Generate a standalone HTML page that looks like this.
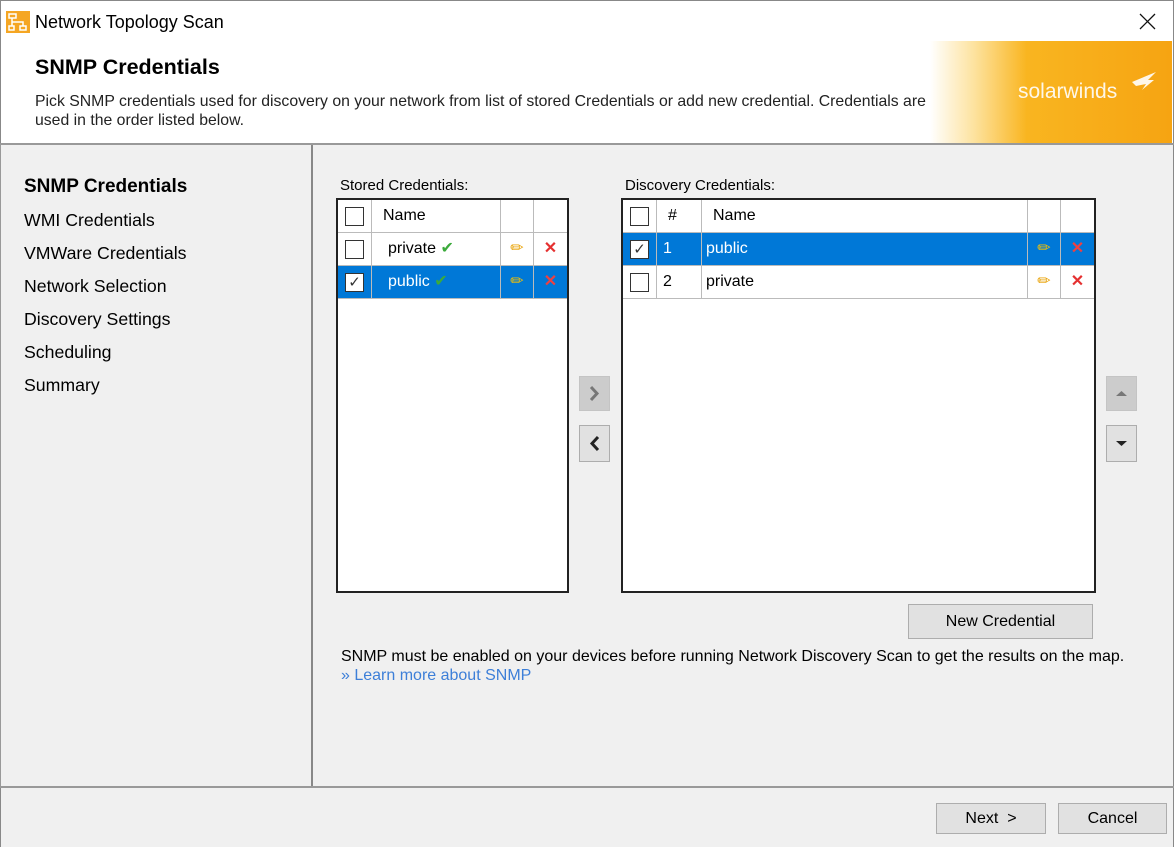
<!DOCTYPE html>
<html><head><style>
*{box-sizing:border-box;margin:0;padding:0}
body{width:1174px;height:847px;position:relative;font-family:"Liberation Sans",sans-serif;background:#f0f0f0;overflow:hidden;color:#000}
.a{position:absolute}
.t{font-size:17.7px}
.tb{position:absolute;background:#fff;border:2px solid #222}
.cell{position:absolute;border-right:1px solid #bbb;border-bottom:1px solid #bbb;height:33px;font-size:16px;line-height:32px}
.cb{position:absolute;width:19px;height:19px;border:1px solid #333;background:#fff;top:7px;left:7px}
.sel{background:#0078d7;color:#fff}
.btn{position:absolute;background:#e1e1e1;border:1px solid #adadad;font-size:16px;text-align:center}
</style></head><body>
<div class="a" style="left:0;top:0;width:1174px;height:143px;background:#fff;border-top:1px solid #888"></div>
<div class="a" style="left:0;top:0;width:1px;height:847px;background:#888"></div>
<div class="a" style="right:0;top:0;width:1px;height:847px;background:#888"></div>
<svg class="a" style="left:6px;top:11px" width="24" height="22" viewBox="0 0 24 22"><rect width="24" height="22" fill="#f5a623"/><rect x="3" y="3" width="7" height="4" fill="none" stroke="#fff" stroke-width="1.5"/><rect x="3" y="15" width="5" height="4" fill="none" stroke="#fff" stroke-width="1.5"/><rect x="14" y="15" width="6" height="4" fill="none" stroke="#fff" stroke-width="1.5"/><path d="M6 7v4h11v4M6 11v4" stroke="#fff" stroke-width="1.5" fill="none"/></svg>
<div class="a" style="left:35px;top:12px;font-size:18px">Network Topology Scan</div>
<svg class="a" style="left:1139px;top:13px" width="17" height="17"><path d="M1 1L16 16M16 1L1 16" stroke="#111" stroke-width="1.3"/></svg>
<div class="a" style="left:35px;top:55px;font-size:21.5px;font-weight:bold">SNMP Credentials</div>
<div class="a" style="left:35px;top:92px;font-size:15.8px;line-height:19px;color:#222;width:910px">Pick SNMP credentials used for discovery on your network from list of stored Credentials or add new credential. Credentials are<br>used in the order listed below.</div>
<div class="a" style="left:930px;top:41px;width:242px;height:102px;background:linear-gradient(90deg,#fff 0%,#fde3a0 18%,#f9b520 40%,#f6a412 100%)"></div>
<div class="a" style="left:1018px;top:80px;color:#fff;font-size:21px;opacity:.9">solarwinds</div>
<svg class="a" style="left:1128px;top:70px" width="30" height="30"><path d="M4 12L28 2 20 10 26 10 14 20 18 14 8 16z" fill="#fff" opacity=".9"/></svg>
<div class="a" style="left:0;top:143px;width:1174px;height:2px;background:#999"></div>
<div class="a" style="left:0;top:145px;width:312px;height:643px;border:1px solid #999;border-top:none"></div>
<div class="a" style="left:311px;top:145px;width:2px;height:643px;background:#888"></div>
<div class="a" style="left:0;top:786px;width:1174px;height:2px;background:#999"></div>
<div class="a t" style="left:24px;top:176px;font-weight:bold;font-size:19px">SNMP Credentials</div>
<div class="a t" style="left:24px;top:210px">WMI Credentials</div>
<div class="a t" style="left:24px;top:243px">VMWare Credentials</div>
<div class="a t" style="left:24px;top:276px">Network Selection</div>
<div class="a t" style="left:24px;top:309px">Discovery Settings</div>
<div class="a t" style="left:24px;top:342px">Scheduling</div>
<div class="a t" style="left:24px;top:375px">Summary</div>
<div class="a" style="left:340px;top:177px;font-size:15px">Stored Credentials:</div>
<div class="a" style="left:625px;top:177px;font-size:15px">Discovery Credentials:</div>
<div class="tb" style="left:336px;top:198px;width:233px;height:395px">
 <div class="cell" style="left:0;top:0;width:34px"><div class="cb"></div></div>
 <div class="cell" style="left:34px;top:0;width:129px;padding-left:11px">Name</div>
 <div class="cell" style="left:163px;top:0;width:33px"></div>
 <div class="cell" style="left:196px;top:0;width:33px;border-right:none"></div>
 <div class="cell" style="left:0;top:33px;width:34px"><div class="cb"></div></div>
 <div class="cell" style="left:34px;top:33px;width:129px;padding-left:16px">private <span style="color:#3caa3c">✔</span></div>
 <div class="cell" style="left:163px;top:33px;width:33px;text-align:center;color:#e8a000">✏</div>
 <div class="cell" style="left:196px;top:33px;width:33px;border-right:none;text-align:center;color:#e53030;font-weight:bold">✕</div>
 <div class="cell sel" style="left:0;top:66px;width:34px"><div class="cb" style="text-align:center;line-height:17px;color:#333;font-size:15px">✓</div></div>
 <div class="cell sel" style="left:34px;top:66px;width:129px;padding-left:16px">public <span style="color:#3caa3c">✔</span></div>
 <div class="cell sel" style="left:163px;top:66px;width:33px;text-align:center;color:#f5c000">✏</div>
 <div class="cell sel" style="left:196px;top:66px;width:33px;border-right:none;text-align:center;color:#f04040;font-weight:bold">✕</div>
</div>
<div class="tb" style="left:621px;top:198px;width:475px;height:395px">
 <div class="cell" style="left:0;top:0;width:34px"><div class="cb"></div></div>
 <div class="cell" style="left:34px;top:0;width:45px;padding-left:11px">#</div>
 <div class="cell" style="left:79px;top:0;width:326px;padding-left:11px">Name</div>
 <div class="cell" style="left:405px;top:0;width:33px"></div>
 <div class="cell" style="left:438px;top:0;width:33px;border-right:none"></div>
 <div class="cell sel" style="left:0;top:33px;width:34px"><div class="cb" style="text-align:center;line-height:17px;color:#333;font-size:15px">✓</div></div>
 <div class="cell sel" style="left:34px;top:33px;width:45px;padding-left:6px">1</div>
 <div class="cell sel" style="left:79px;top:33px;width:326px;padding-left:4px">public</div>
 <div class="cell sel" style="left:405px;top:33px;width:33px;text-align:center;color:#f5c000">✏</div>
 <div class="cell sel" style="left:438px;top:33px;width:33px;border-right:none;text-align:center;color:#f04040;font-weight:bold">✕</div>
 <div class="cell" style="left:0;top:66px;width:34px"><div class="cb"></div></div>
 <div class="cell" style="left:34px;top:66px;width:45px;padding-left:6px">2</div>
 <div class="cell" style="left:79px;top:66px;width:326px;padding-left:4px">private</div>
 <div class="cell" style="left:405px;top:66px;width:33px;text-align:center;color:#e8a000">✏</div>
 <div class="cell" style="left:438px;top:66px;width:33px;border-right:none;text-align:center;color:#e53030;font-weight:bold">✕</div>
</div>
<div class="btn" style="left:579px;top:376px;width:31px;height:35px;background:#ccc;border-color:#c4c4c4"><svg width="29" height="33"><path d="M11 10l6 6.5-6 6.5" stroke="#777" stroke-width="3" fill="none"/></svg></div>
<div class="btn" style="left:579px;top:425px;width:31px;height:37px"><svg width="29" height="35"><path d="M18 11l-6 6.5 6 6.5" stroke="#222" stroke-width="3" fill="none"/></svg></div>
<div class="btn" style="left:1106px;top:376px;width:31px;height:35px;background:#ccc;border-color:#c4c4c4"><svg width="29" height="33"><path d="M9 19l5.5-5 5.5 5z" fill="#777"/></svg></div>
<div class="btn" style="left:1106px;top:425px;width:31px;height:37px"><svg width="29" height="35"><path d="M9 15l5.5 5 5.5-5z" fill="#222"/></svg></div>
<div class="btn" style="left:908px;top:604px;width:185px;height:35px;line-height:33px">New Credential</div>
<div class="a" style="left:341px;top:648px;font-size:16px">SNMP must be enabled on your devices before running Network Discovery Scan to get the results on the map.</div>
<div class="a" style="left:341px;top:667px;font-size:16px;color:#3d7fd8">» Learn more about SNMP</div>
<div class="btn" style="left:936px;top:803px;width:110px;height:31px;line-height:29px">Next &nbsp;&gt;</div>
<div class="btn" style="left:1058px;top:803px;width:109px;height:31px;line-height:29px">Cancel</div>
</body></html>
